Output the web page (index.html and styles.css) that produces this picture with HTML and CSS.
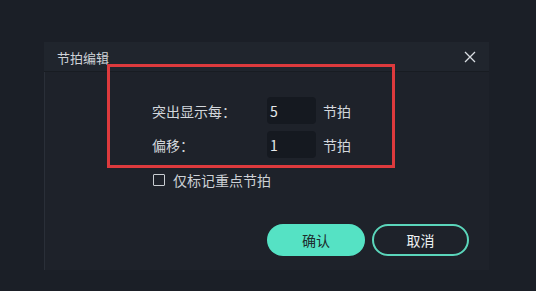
FILE: index.html
```html
<!DOCTYPE html>
<html lang="zh">
<head>
<meta charset="utf-8">
<link rel="stylesheet" href="styles.css">
</head>
<body>
<div class="dialog">
  <div class="header">
    <span class="title">节拍编辑</span>
    <svg class="close" width="12" height="12" viewBox="0 0 12 12"><path d="M1 1L11 11M11 1L1 11" stroke="#d9dde2" stroke-width="1.3" fill="none"/></svg>
  </div>
  <div class="body">
    <div class="form">
      <div class="row">
        <span class="label">突出显示每：</span>
        <div class="input">5</div>
        <span class="unit">节拍</span>
      </div>
      <div class="row">
        <span class="label">偏移：</span>
        <div class="input">1</div>
        <span class="unit">节拍</span>
      </div>
      <label class="check">
        <span class="box"></span>
        <span>仅标记重点节拍</span>
      </label>
    </div>
    <div class="actions">
      <button class="btn primary">确认</button>
      <button class="btn outline">取消</button>
    </div>
  </div>
  <div class="highlight"></div>
</div>
</body>
</html>
```
FILE: styles.css
```css
html, body {
  margin: 0;
  padding: 0;
  background: #1b1f27;
  font-family: "Noto Sans CJK SC", "Noto Sans", sans-serif;
  color: #d3d7dc;
}
body {
  width: 536px;
  height: 291px;
  overflow: hidden;
}
.dialog {
  position: relative;
  margin: 42px 0 0 44px;
  width: 445px;
  height: 228px;
  background: #1e222a;
  box-shadow: inset 1px 0 0 #2a2f38;
  display: flex;
  flex-direction: column;
}
.header {
  height: 29px;
  border-bottom: 1px solid #181c22;
  background: #20252d;
  display: flex;
  align-items: center;
  justify-content: space-between;
  padding: 0 13px;
}
.title {
  font-size: 13px;
  color: #cfd3d8;
  line-height: 1;
  margin-top: 2px;
}
.close {
  display: block;
}
.body {
  flex: 1;
  display: flex;
  flex-direction: column;
  padding: 25px 20px 14px 108px;
}
.form {
  display: flex;
  flex-direction: column;
  gap: 7px;
}
.row {
  display: flex;
  align-items: center;
  height: 27px;
  font-size: 14px;
}
.label {
  width: 115px;
  color: #d3d7dc;
}
.input {
  width: 46px;
  height: 27px;
  background: #151920;
  border-radius: 4px;
  padding-left: 3px;
  color: #e6e9ec;
  font-size: 14px;
  line-height: 29px;
}
.unit {
  margin-left: 7px;
  color: #d3d7dc;
}
.check {
  display: flex;
  align-items: center;
  margin-top: 5px;
  margin-left: 1px;
  font-size: 14px;
  height: 20px;
  color: #cdd1d6;
}
.box {
  width: 10px;
  height: 10px;
  border: 1px solid #c9cdd2;
  border-radius: 1px;
  margin-right: 8px;
}
.actions {
  margin-top: auto;
  display: flex;
  justify-content: flex-end;
  gap: 7px;
}
.btn {
  width: 97px;
  height: 32px;
  border-radius: 16px;
  font-family: "Noto Sans CJK SC", "Noto Sans", sans-serif;
  font-size: 14px;
  padding: 0;
  box-sizing: border-box;
}
.primary {
  width: 98px;
  background: #55e2c4;
  border: none;
  color: #1d2b2c;
}
.outline {
  background: transparent;
  border: 2px solid #5bd6bb;
  color: #eef1f3;
}
.highlight {
  position: absolute;
  left: 63px;
  top: 22px;
  width: 282px;
  height: 98px;
  border: 3px solid #dd3a3d;
}
```
